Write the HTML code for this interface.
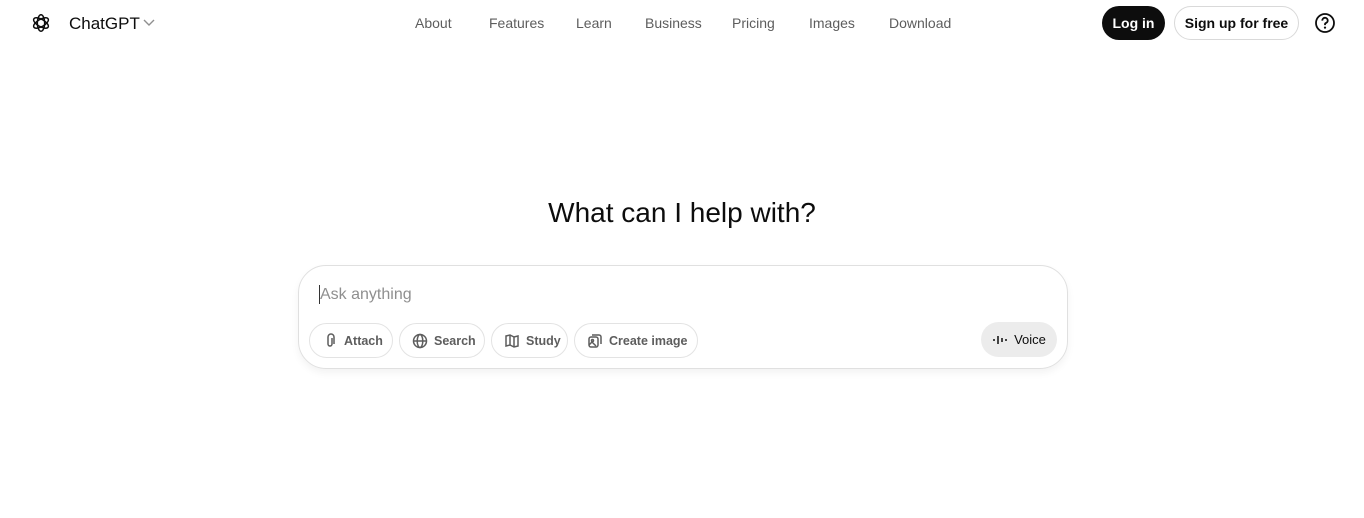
<!DOCTYPE html>
<html><head><meta charset="utf-8"><style>
*{box-sizing:border-box;margin:0;padding:0}
body{width:1364px;height:518px;background:#fff;font-family:"Liberation Sans",sans-serif;color:#0d0d0d;position:relative;overflow:hidden}
.abs{position:absolute}
.nav a{position:absolute;top:15px;font-size:14px;color:#5d5d5d;text-decoration:none}
.btn{position:absolute;border-radius:20px;font-size:14px;font-weight:bold;display:flex;align-items:center;justify-content:center}
.chip{position:absolute;top:323px;height:35px;border:1px solid #e3e3e3;border-radius:18px;font-size:12.5px;color:#5d5d5d;display:flex;align-items:center;padding-left:12px;gap:6px;font-weight:bold}
.chip svg{width:16px;height:16px;stroke:#5d5d5d;fill:none;stroke-width:1.5}
</style></head><body>
<svg class="abs" style="left:30px;top:12px" width="22" height="22" viewBox="0 0 24 24" fill="none" stroke="#0d0d0d" stroke-width="1.6">
<g transform="translate(12 12)">
<ellipse rx="4" ry="9" transform="rotate(0)"/><ellipse rx="4" ry="9" transform="rotate(60)"/><ellipse rx="4" ry="9" transform="rotate(120)"/>
</g></svg>
<div class="abs" style="left:69px;top:14px;font-size:17px;color:#0d0d0d">ChatGPT</div>
<svg class="abs" style="left:143px;top:18px" width="12" height="10" viewBox="0 0 12 10"><path d="M1 2l5 5 5-5" stroke="#8f8f8f" stroke-width="1.4" fill="none"/></svg>
<div class="nav">
<a style="left:415px">About</a><a style="left:489px">Features</a><a style="left:576px">Learn</a><a style="left:645px">Business</a><a style="left:732px">Pricing</a><a style="left:809px">Images</a><a style="left:889px">Download</a>
</div>
<div class="btn" style="left:1102px;top:6px;width:63px;height:34px;background:#0d0d0d;color:#fff">Log in</div>
<div class="btn" style="left:1174px;top:6px;width:125px;height:34px;border:1px solid #d9d9d9;color:#0d0d0d">Sign up for free</div>
<svg class="abs" style="left:1314px;top:12px" width="22" height="22" viewBox="0 0 22 22"><circle cx="11" cy="11" r="9" stroke="#0d0d0d" stroke-width="1.8" fill="none"/><path d="M8.3 8.6a2.7 2.7 0 1 1 3.7 2.4c-.7.3-1 .8-1 1.5v.6" stroke="#0d0d0d" stroke-width="1.8" fill="none"/><circle cx="11" cy="15.6" r="1.1" fill="#0d0d0d"/></svg>
<div class="abs" style="left:0;width:1364px;top:197px;text-align:center;font-size:28px;color:#0d0d0d">What can I help with?</div>
<div class="abs" style="left:298px;top:265px;width:770px;height:104px;border:1px solid #e0e0e0;border-radius:28px;box-shadow:0 4px 8px rgba(0,0,0,0.05)"></div>
<div class="abs" style="left:319px;top:285px;width:1px;height:19px;background:#333"></div>
<div class="abs" style="left:320px;top:286px;font-size:16px;color:#8f8f8f">Ask anything</div>
<div class="chip" style="left:309px;width:84px"><svg viewBox="0 0 16 16"><path d="M10 5v6a2 2 0 0 1-4 0V4a3 3 0 0 1 6 0v7"/></svg>Attach</div>
<div class="chip" style="left:399px;width:86px"><svg viewBox="0 0 16 16"><circle cx="8" cy="8" r="6.5"/><ellipse cx="8" cy="8" rx="2.8" ry="6.5"/><path d="M1.5 8h13"/></svg>Search</div>
<div class="chip" style="left:491px;width:77px"><svg viewBox="0 0 16 16"><path d="M2 3l4-1 4 2 4-1v10l-4 1-4-2-4 1z"/><path d="M6 2v10M10 4v10"/></svg>Study</div>
<div class="chip" style="left:574px;width:124px"><svg viewBox="0 0 16 16"><rect x="2" y="4" width="9" height="10" rx="2"/><path d="M5 2h7a2 2 0 0 1 2 2v7"/><circle cx="5.5" cy="7.5" r="1"/><path d="M2 12l3-3 4 4"/></svg>Create image</div>
<div class="btn" style="left:981px;top:322px;width:76px;height:35px;background:#ececec;color:#0d0d0d;font-size:13px;font-weight:normal;gap:6px">
<svg width="16" height="14" viewBox="0 0 16 14" stroke="#0d0d0d" stroke-width="1.5"><path d="M2 6v2M6 3v8M10 5v4M14 6v2"/></svg>Voice</div>
</body></html>
